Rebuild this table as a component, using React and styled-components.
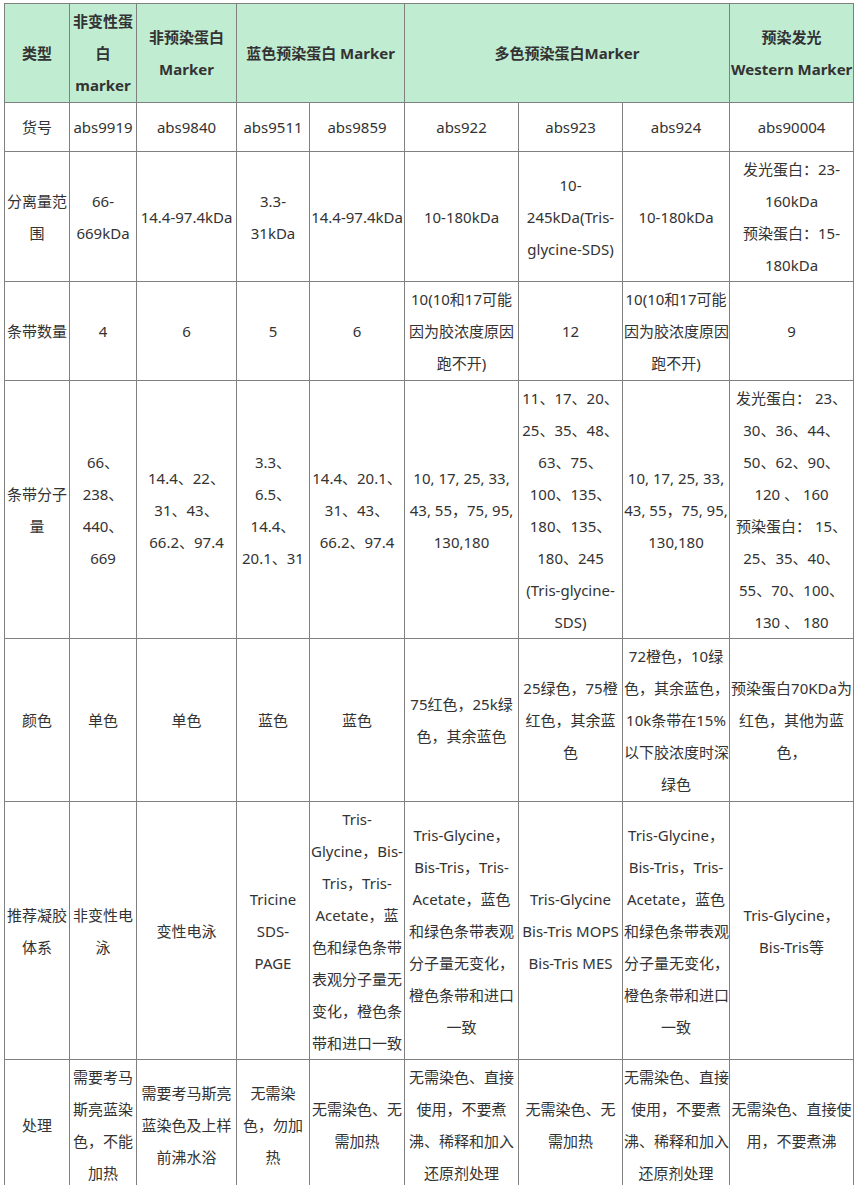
import React from "react";
import styled, { createGlobalStyle } from "styled-components";

const GlobalStyle = createGlobalStyle`
  html, body {
    margin: 0;
    padding: 0;
    background: #ffffff;
  }
  body {
    font-family: "Noto Sans", "Noto Sans CJK SC", sans-serif;
    font-size: 15px;
    color: #333333;
  }
`;

const Page = styled.div`
  padding: 3px 0 0 4px;
`;

const Table = styled.table`
  border-collapse: collapse;
  table-layout: fixed;
  width: 850px;
  border: 1px solid #808080;
`;

const Col = styled.col`
  width: ${(p) => p.$w}px;
`;

const Row = styled.tr`
  height: ${(p) => (p.$h ? `${p.$h}px` : "auto")};
`;

const HeadCell = styled.th`
  background: #c0ecd2;
  border: 1px solid #808080;
  padding: 1px 1px 0.5px;
  font-weight: 700;
  line-height: 32px;
  text-align: center;
  vertical-align: middle;
  white-space: nowrap;
  color: #333333;
`;

const Cell = styled.td`
  border: 1px solid #808080;
  padding: 1px 1px 0.5px;
  line-height: 32px;
  text-align: center;
  vertical-align: middle;
  white-space: nowrap;
  color: #333333;
`;

const Lines = ({ lines }) =>
  lines.map((l, i) => (
    <React.Fragment key={i}>
      {i > 0 && <br />}
      {l}
    </React.Fragment>
  ));

const widths = [65, 67, 100, 73, 95, 114, 104, 107, 124];

const header = [
  { lines: ["类型"] },
  { lines: ["非变性蛋", "白", "marker"] },
  { lines: ["非预染蛋白", "Marker"] },
  { lines: ["蓝色预染蛋白 Marker"], span: 2 },
  { lines: ["多色预染蛋白Marker"], span: 3 },
  { lines: ["预染发光", "Western Marker"] },
];

const mw922 = ["10, 17, 25, 33,", "43, 55，75, 95,", "130,180"];
const gel922 = [
  "Tris-Glycine，",
  "Bis-Tris，Tris-",
  "Acetate，蓝色",
  "和绿色条带表观",
  "分子量无变化，",
  "橙色条带和进口",
  "一致",
];
const treat922 = ["无需染色、直接", "使用，不要煮", "沸、稀释和加入", "还原剂处理"];
const count922 = ["10(10和17可能", "因为胶浓度原因", "跑不开)"];

const rows = [
  {
    h: 49,
    cells: [
      ["货号"],
      ["abs9919"],
      ["abs9840"],
      ["abs9511"],
      ["abs9859"],
      ["abs922"],
      ["abs923"],
      ["abs924"],
      ["abs90004"],
    ],
  },
  {
    cells: [
      ["分离量范", "围"],
      ["66-", "669kDa"],
      ["14.4-97.4kDa"],
      ["3.3-", "31kDa"],
      ["14.4-97.4kDa"],
      ["10-180kDa"],
      ["10-", "245kDa(Tris-", "glycine-SDS)"],
      ["10-180kDa"],
      ["发光蛋白：23-", "160kDa", "预染蛋白：15-", "180kDa"],
    ],
  },
  {
    cells: [
      ["条带数量"],
      ["4"],
      ["6"],
      ["5"],
      ["6"],
      count922,
      ["12"],
      count922,
      ["9"],
    ],
  },
  {
    cells: [
      ["条带分子", "量"],
      ["66、", "238、", "440、", "669"],
      ["14.4、22、", "31、43、", "66.2、97.4"],
      ["3.3、", "6.5、", "14.4、", "20.1、31"],
      ["14.4、20.1、", "31、43、", "66.2、97.4"],
      mw922,
      [
        "11、17、20、",
        "25、35、48、",
        "63、75、",
        "100、135、",
        "180、135、",
        "180、245",
        "(Tris-glycine-",
        "SDS)",
      ],
      mw922,
      [
        "发光蛋白： 23、",
        "30、36、44、",
        "50、62、90、",
        "120 、 160",
        "预染蛋白： 15、",
        "25、35、40、",
        "55、70、100、",
        "130 、 180",
      ],
    ],
  },
  {
    cells: [
      ["颜色"],
      ["单色"],
      ["单色"],
      ["蓝色"],
      ["蓝色"],
      ["75红色，25k绿", "色，其余蓝色"],
      ["25绿色，75橙", "红色，其余蓝", "色"],
      ["72橙色，10绿", "色，其余蓝色，", "10k条带在15%", "以下胶浓度时深", "绿色"],
      ["预染蛋白70KDa为", "红色，其他为蓝", "色，"],
    ],
  },
  {
    cells: [
      ["推荐凝胶", "体系"],
      ["非变性电", "泳"],
      ["变性电泳"],
      ["Tricine", "SDS-", "PAGE"],
      [
        "Tris-",
        "Glycine，Bis-",
        "Tris，Tris-",
        "Acetate，蓝",
        "色和绿色条带",
        "表观分子量无",
        "变化，橙色条",
        "带和进口一致",
      ],
      gel922,
      ["Tris-Glycine", "Bis-Tris MOPS", "Bis-Tris MES"],
      gel922,
      ["Tris-Glycine，", "Bis-Tris等"],
    ],
  },
  {
    cells: [
      ["处理"],
      ["需要考马", "斯亮蓝染", "色，不能", "加热"],
      ["需要考马斯亮", "蓝染色及上样", "前沸水浴"],
      ["无需染", "色，勿加", "热"],
      ["无需染色、无", "需加热"],
      treat922,
      ["无需染色、无", "需加热"],
      treat922,
      ["无需染色、直接使", "用，不要煮沸"],
    ],
  },
];

export default function App() {
  return (
    <>
      <GlobalStyle />
      <Page>
        <Table>
          <colgroup>
            {widths.map((w, i) => (
              <Col key={i} $w={w} />
            ))}
          </colgroup>
          <thead>
            <Row>
              {header.map((c, i) => (
                <HeadCell key={i} colSpan={c.span || 1}>
                  <Lines lines={c.lines} />
                </HeadCell>
              ))}
            </Row>
          </thead>
          <tbody>
            {rows.map((r, ri) => (
              <Row key={ri} $h={r.h}>
                {r.cells.map((c, ci) => (
                  <Cell key={ci}>
                    <Lines lines={c} />
                  </Cell>
                ))}
              </Row>
            ))}
          </tbody>
        </Table>
      </Page>
    </>
  );
}
